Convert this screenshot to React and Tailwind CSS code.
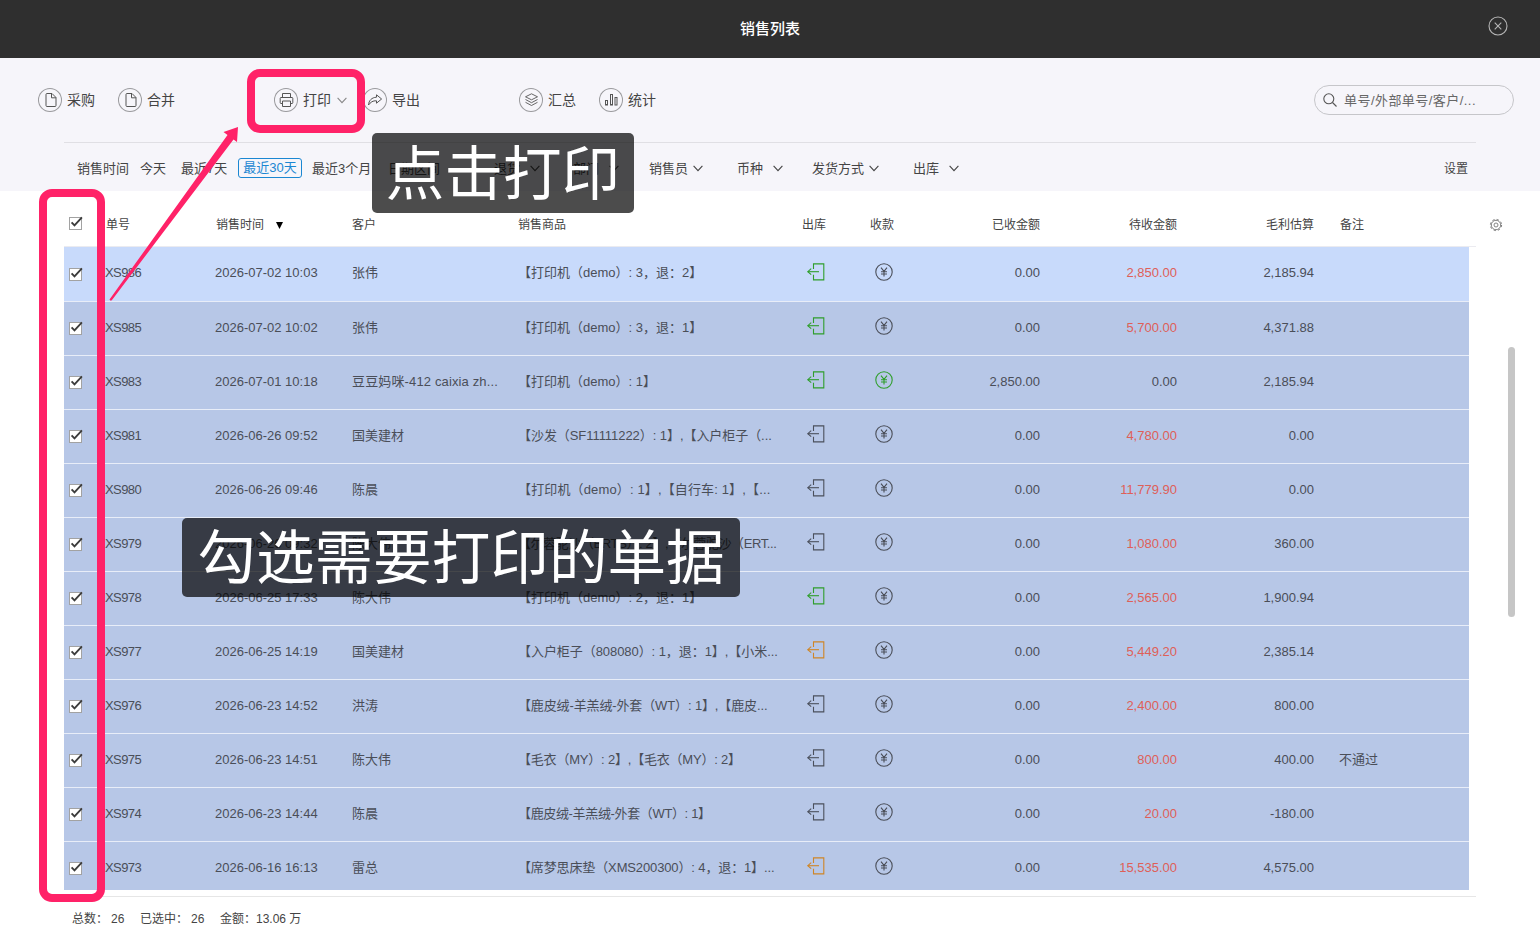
import React, { useState } from 'react';

const orders = [
  { id: 'XS986', time: '2026-07-02 10:03', customer: '张伟', goods: '【打印机（demo）: 3，退：2】', out: 'green', paid: false, received: '0.00', pending: '2,850.00', profit: '2,185.94' },
  { id: 'XS985', time: '2026-07-02 10:02', customer: '张伟', goods: '【打印机（demo）: 3，退：1】', out: 'green', paid: false, received: '0.00', pending: '5,700.00', profit: '4,371.88' },
  { id: 'XS983', time: '2026-07-01 10:18', customer: '豆豆妈咪-412 caixia zh...', goods: '【打印机（demo）: 1】', out: 'green', paid: true, received: '2,850.00', pending: '0.00', profit: '2,185.94' },
  { id: 'XS981', time: '2026-06-26 09:52', customer: '国美建材', goods: '【沙发（SF11111222）: 1】,【入户柜子（...', tracking: 'tracking-[-0.06px]', out: 'gray', paid: false, received: '0.00', pending: '4,780.00', profit: '0.00' },
  { id: 'XS980', time: '2026-06-26 09:46', customer: '陈晨', goods: '【打印机（demo）: 1】,【自行车: 1】,【...', tracking: 'tracking-[0.14px]', out: 'gray', paid: false, received: '0.00', pending: '11,779.90', profit: '0.00' },
  { id: 'XS979', time: '2026-06-26 09:32', customer: '陈大伟', goods: '【尔蓉驼沙（ERTS）: 2】,【尔蓉驼沙（ERT...', tracking: 'tracking-[-0.4px]', out: 'gray', paid: false, received: '0.00', pending: '1,080.00', profit: '360.00' },
  { id: 'XS978', time: '2026-06-25 17:33', customer: '陈大伟', goods: '【打印机（demo）: 2，退：1】', out: 'green', paid: false, received: '0.00', pending: '2,565.00', profit: '1,900.94' },
  { id: 'XS977', time: '2026-06-25 14:19', customer: '国美建材', goods: '【入户柜子（808080）: 1，退：1】,【小米...', tracking: 'tracking-[-0.06px]', out: 'orange', paid: false, received: '0.00', pending: '5,449.20', profit: '2,385.14' },
  { id: 'XS976', time: '2026-06-23 14:52', customer: '洪涛', goods: '【鹿皮绒-羊羔绒-外套（WT）: 1】,【鹿皮...', tracking: 'tracking-[-0.13px]', out: 'gray', paid: false, received: '0.00', pending: '2,400.00', profit: '800.00' },
  { id: 'XS975', time: '2026-06-23 14:51', customer: '陈大伟', goods: '【毛衣（MY）: 2】,【毛衣（MY）: 2】', tracking: 'tracking-[-0.2px]', out: 'gray', paid: false, received: '0.00', pending: '800.00', profit: '400.00', note: '不通过' },
  { id: 'XS974', time: '2026-06-23 14:44', customer: '陈晨', goods: '【鹿皮绒-羊羔绒-外套（WT）: 1】', tracking: 'tracking-[-0.35px]', out: 'gray', paid: false, received: '0.00', pending: '20.00', profit: '-180.00' },
  { id: 'XS973', time: '2026-06-16 16:13', customer: '雷总', goods: '【席梦思床垫（XMS200300）: 4，退：1】...', tracking: 'tracking-[-0.13px]', out: 'orange', paid: false, received: '0.00', pending: '15,535.00', profit: '4,575.00' },
];

const outColors = {
  green: 'text-[#2f9e2b]',
  gray: 'text-[#4b505c]',
  orange: 'text-[#cf8526]',
};

const gridCols = 'grid grid-cols-[41px_110px_137px_166px_284px_68px_170px_137px_137px_1fr]';

const Chevron = () => (
  <svg width="10" height="7" viewBox="0 0 10 7" fill="none" stroke="currentColor" strokeWidth="1.1">
    <path d="M0.6 0.8 L5 5.6 L9.4 0.8" />
  </svg>
);

const FileIcon = () => (
  <svg width="24" height="24" viewBox="0 0 24 24" fill="none" stroke="currentColor" strokeWidth="1">
    <path d="M8 6.5 a1 1 0 0 1 1 -1 H14 L18 9.5 V17.5 a1 1 0 0 1 -1 1 H9 a1 1 0 0 1 -1 -1 Z" />
    <path d="M13.5 5.5 V9.8 H18" />
  </svg>
);

const PrintIcon = () => (
  <svg width="24" height="24" viewBox="0 0 24 24" fill="none" stroke="currentColor" strokeWidth="1">
    <path d="M8.5 9.5 V5.5 H16.500 V9.5" />
    <path d="M8.5 15.5 H7 a0.800 0.800 0 0 1 -0.800 -0.800 V10.300 a0.800 0.800 0 0 1 0.800 -0.800 H18 a0.800 0.800 0 0 1 0.800 0.800 V14.700 a0.800 0.800 0 0 1 -0.800 0.800 H16.500" />
    <path d="M8.5 13 H16.500 V18.500 H8.500 Z" />
  </svg>
);

const ShareIcon = () => (
  <svg width="24" height="24" viewBox="0 0 24 24" fill="none" stroke="currentColor" strokeWidth="1" strokeLinejoin="round">
    <path d="M13.500 6.800 L18.600 11 L13.500 15.200 V12.800 C9.800 12.500 7.600 14.200 5.500 17 C5.800 12.600 8.600 9.500 13.500 9.200 Z" />
  </svg>
);

const LayersIcon = () => (
  <svg width="24" height="24" viewBox="0 0 24 24" fill="none" stroke="currentColor" strokeWidth="0.9" strokeLinejoin="round">
    <path d="M12.500 5.800 L18.500 8.800 L12.500 11.800 L6.500 8.800 Z" />
    <path d="M6.500 11.500 L12.500 14.700 L18.500 11.500" />
    <path d="M6.500 14.300 L12.500 17.500 L18.500 14.300" />
  </svg>
);

const ChartIcon = () => (
  <svg width="24" height="24" viewBox="0 0 24 24" fill="none" stroke="currentColor" strokeWidth="1">
    <rect x="6.500" y="12.500" width="2" height="4.500" />
    <rect x="11.500" y="6.500" width="2" height="10.500" />
    <rect x="16" y="9.500" width="2" height="7.500" />
  </svg>
);

const OutIcon = () => (
  <svg width="18" height="18" viewBox="0 0 18 18" fill="none" stroke="currentColor" strokeWidth="1.1">
    <path d="M6.500 6 V0.900 H16.800 V16.900 H6.500 V11.800" />
    <path d="M12 8.700 H0.800" />
    <path d="M4.200 5.700 L0.800 8.700 L4.200 11.700" />
  </svg>
);

const YenIcon = () => (
  <svg width="18" height="18" viewBox="0 0 18 18" fill="none" stroke="currentColor" strokeWidth="1.1">
    <circle cx="9" cy="9" r="8.200" />
    <path d="M6 4.600 L9 8.400 L12 4.600 M9 8.400 V13.500 M6 8.700 H12 M6 11 H12" />
  </svg>
);

const GearIcon = () => (
  <svg width="14" height="14" viewBox="0 0 14 14" fill="none" stroke="#777" strokeWidth="0.900">
    <circle cx="7" cy="7" r="2" />
    <circle cx="7" cy="7" r="4.700" />
    <circle cx="7" cy="7" r="5.600" strokeWidth="1" strokeDasharray="2.200 2.200" />
  </svg>
);

const Checkbox = ({ checked, onChange }) => (
  <button type="button" onClick={onChange} className="block w-[14px] h-[14px]">
    <svg width="14" height="14" viewBox="0 0 14 14" fill="none">
      <rect x="0.500" y="1.500" width="12" height="12" fill="#fff" stroke="#a2a2a2" />
      {checked && <path d="M2.600 6.300 L5.500 9.300 L12.900 1.300" stroke="#3c3c3c" strokeWidth="1.900" />}
    </svg>
  </button>
);

const ToolButton = ({ icon, label, className, children }) => (
  <div className={`flex items-center text-sm ${className}`}>
    <span className="w-6 h-6 mr-[5px] shrink-0 rounded-full text-[#555] shadow-[inset_0_0_0_1px_#9a9a9d]">{icon}</span>
    <span className="whitespace-nowrap">{label}</span>
    {children}
  </div>
);

const Filter = ({ label, className }) => (
  <div className={`flex shrink-0 items-center whitespace-nowrap ${className}`}>
    <span className="flex-1">{label}</span>
    <Chevron />
  </div>
);

const App = () => {
  const [selected, setSelected] = useState(orders.map((o) => o.id));

  const toggle = (id) => {
    setSelected(selected.includes(id) ? selected.filter((s) => s !== id) : [...selected, id]);
  };

  const toggleAll = () => {
    setSelected(selected.length === orders.length ? [] : orders.map((o) => o.id));
  };

  return (
    <div className="relative w-[1540px] h-[939px] overflow-hidden bg-white text-[#444] text-[13px] font-['Liberation_Sans','Noto_Sans_CJK_SC',sans-serif]">
      {/* Title bar */}
      <header className="flex h-[58px] items-center bg-[#2f2f2f] pr-8 pl-[52px]">
        <h1 className="flex-1 text-center text-[15px] font-medium text-white">销售列表</h1>
        <svg width="20" height="20" viewBox="0 0 20 20" fill="none" stroke="#b5b5b5" strokeWidth="1.100" className="mb-[6px]">
          <circle cx="10" cy="10" r="9" />
          <path d="M6.700 6.700 L13.300 13.300 M13.300 6.700 L6.700 13.300" />
        </svg>
      </header>

      <div className="h-[133px] bg-[#f6f5fa]">
        {/* Toolbar */}
        <div className="flex h-[84px] items-center pl-[38px] pr-[26px]">
          <ToolButton icon={<FileIcon />} label="采购" className="w-20" />
          <ToolButton icon={<FileIcon />} label="合并" className="w-[156px]" />
          <ToolButton icon={<PrintIcon />} label="打印" className="w-[89px]">
            <span className="ml-[6px] text-[#888]"><Chevron /></span>
          </ToolButton>
          <ToolButton icon={<ShareIcon />} label="导出" className="w-[156px]" />
          <ToolButton icon={<LayersIcon />} label="汇总" className="w-20" />
          <ToolButton icon={<ChartIcon />} label="统计" className="w-20" />
          <div className="ml-auto flex h-[30px] w-[200px] items-center gap-[7px] rounded-full border border-[#c6c6ca] pl-2 text-[#666]">
            <svg width="14" height="14" viewBox="0 0 14 14" fill="none" stroke="#555" strokeWidth="1.100">
              <circle cx="5.800" cy="5.800" r="5" />
              <path d="M9.500 9.500 L13.500 13.500" />
            </svg>
            <span className="whitespace-nowrap pt-[2px] tracking-[0.45px]">单号/外部单号/客户/...</span>
          </div>
        </div>

        {/* Filters */}
        <div className="ml-16 flex h-[49px] w-[1412px] items-center border-t border-[#e0dfe4] pl-[13px] pr-2 pt-[3px]">
          <span className="w-[63px] shrink-0">销售时间</span>
          <span className="w-[41px] shrink-0">今天</span>
          <span className="w-[57px] shrink-0">最近7天</span>
          <span className="mb-[2px] mr-[10px] flex h-5 w-16 shrink-0 items-center justify-center rounded-[3px] border border-[#1b87d2] pt-px text-[#1b87d2]">最近30天</span>
          <span className="w-[76px] shrink-0">最近3个月</span>
          <span className="w-[106px] shrink-0">日期区间</span>
          <Filter label="退货" className="mr-[33px] w-[46px]" />
          <Filter label="部门" className="mr-[30px] w-[46px]" />
          <Filter label="销售员" className="mr-[34px] w-[54px]" />
          <Filter label="币种" className="mr-[29px] w-[46px]" />
          <Filter label="发货方式" className="mr-[34px] w-[67px]" />
          <Filter label="出库" className="w-[46px]" />
          <span className="ml-auto text-xs">设置</span>
        </div>
      </div>

      {/* Table head */}
      <div className="flex h-14 items-center pl-16">
        <div className={`${gridCols} h-full w-[1412px] items-center border-b border-[#ebebf0] pr-[7px] pt-[13px] text-xs`}>
          <div className="pb-[4px] pl-[5px]">
            <Checkbox checked={selected.length === orders.length} onChange={toggleAll} />
          </div>
          <div className="pl-px">单号</div>
          <div className="flex items-center gap-3 pl-px">
            销售时间
            <svg width="7" height="7" viewBox="0 0 7 7" fill="#000"><path d="M0 0 H7 L3.500 7 Z" /></svg>
          </div>
          <div>客户</div>
          <div>销售商品</div>
          <div>出库</div>
          <div className="flex justify-between">
            <span>收款</span>
            <span>已收金额</span>
          </div>
          <div className="text-right">待收金额</div>
          <div className="text-right">毛利估算</div>
          <div className="pl-[26px]">备注</div>
        </div>
        <div className="ml-[13px] mt-[12px]"><GearIcon /></div>
      </div>

      {/* Orders */}
      <div className="ml-16 h-[643px] w-[1405px] overflow-hidden">
        {orders.map((order, index) => (
          <div
            key={order.id}
            className={`${gridCols} items-center border-b border-[#e8edf8] pb-[2px] text-[#4a4e58] whitespace-nowrap ${index === 0 ? 'h-[55px] bg-[#c8dafb]' : 'h-[54px] bg-[#b7c7e7]'}`}
          >
            <div className="pl-[5px] pt-px">
              <Checkbox checked={selected.includes(order.id)} onChange={() => toggle(order.id)} />
            </div>
            <div className="tracking-[-0.6px]">{order.id}</div>
            <div>{order.time}</div>
            <div className={order.customer.length > 10 ? 'tracking-[0.14px]' : ''}>{order.customer}</div>
            <div className={order.tracking}>{order.goods}</div>
            <div className={`mb-[3px] pl-[5px] ${outColors[order.out]}`}><OutIcon /></div>
            <div className={`flex items-center pl-[4.5px] ${order.paid ? 'text-[#2f9e2b]' : ''}`}>
              <span className="mb-[3px]"><YenIcon /></span>
              <span className="ml-auto text-[#4a4e58]">{order.received}</span>
            </div>
            <div className={`text-right ${order.paid ? '' : 'text-[#df5f58]'}`}>{order.pending}</div>
            <div className="text-right">{order.profit}</div>
            <div className="pl-[25px]">{order.note}</div>
          </div>
        ))}
      </div>

      {/* Summary */}
      <div className="ml-16 mt-[6px] flex h-[43px] w-[1412px] items-center border-t border-[#e6e6e6] pl-2 pt-[2px] text-xs">
        <span className="w-[39px]">总数：</span>
        <span className="w-[29px]">26</span>
        <span className="w-[51px]">已选中：</span>
        <span className="w-[29px]">26</span>
        <span className="w-[36px]">金额：</span>
        <span>13.06 万</span>
      </div>

      {/* Scrollbar thumb */}
      <div className="absolute left-[1508px] top-[347px] h-[270px] w-[7px] rounded-full bg-[#c6c6c6]" />

      {/* Tutorial marks */}
      <div className="absolute left-[372px] top-[133px] flex h-[80px] w-[262px] items-center justify-center rounded-[5px] bg-black/70 pt-[4px] text-[58.6px] leading-none text-white whitespace-nowrap">点击打印</div>
      <div className="absolute left-[182px] top-[518px] flex h-[79px] w-[558px] items-center justify-center rounded-[5px] bg-black/70 pt-[4px] text-[58.6px] leading-none text-white whitespace-nowrap">勾选需要打印的单据</div>
      <div className="absolute left-[247px] top-[69px] h-[64px] w-[118px] rounded-[13px] border-8 border-[#ff2268]" />
      <div className="absolute left-[39px] top-[189px] h-[713px] w-[66px] rounded-[13px] border-8 border-[#ff2268]" />
      <svg width="140" height="184" viewBox="0 0 140 184" className="absolute left-[104px] top-[122px]" fill="#ff2268">
        <path d="M134 5 L133 20 L129.500 17.500 L8 178 Q6.500 179.500 5.500 177.500 L123.500 13 L119.500 10 Z" />
      </svg>
    </div>
  );
};

export default App;
